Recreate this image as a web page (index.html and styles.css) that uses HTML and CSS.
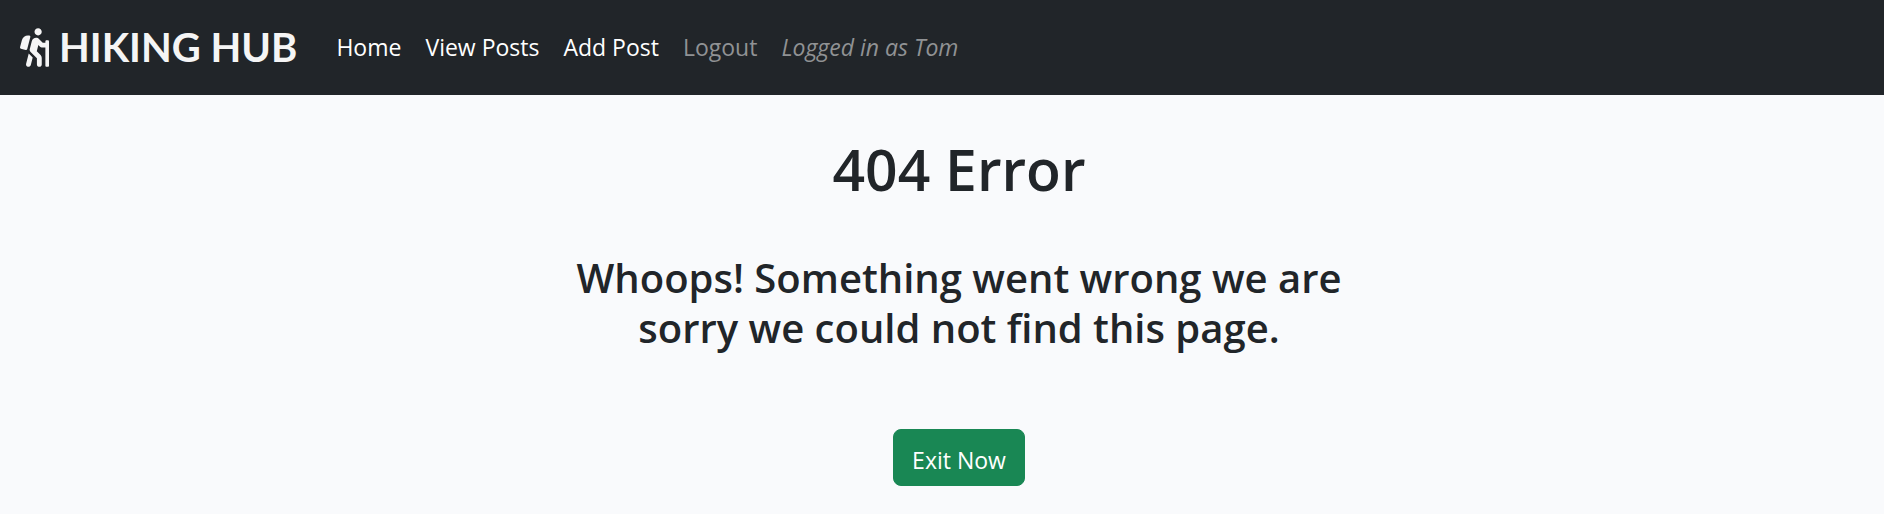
FILE: index.html
```
<!DOCTYPE html>
<html lang="en">
<head>
<meta charset="utf-8">
<meta name="viewport" content="width=device-width, initial-scale=1">
<title>Hiking Hub</title>
<link rel="stylesheet" href="styles.css">
</head>
<body>
<nav class="navbar">
  <a class="brand" href="#">
    <svg class="brand-icon" viewBox="0 0 384 512" fill="currentColor" aria-hidden="true"><path d="M80.95 472.23c-4.28 17.16 6.14 34.53 23.28 38.81 2.61.66 5.22.95 7.8.95 14.33 0 27.37-9.7 31.02-24.23l25.24-100.97-52.78-52.78-34.56 138.22zm14.89-196.12L137 117c2.19-8.42-3.14-16.95-11.92-19.06-43.88-10.52-88.35 15.07-99.32 57.17L.49 253.24c-2.19 8.42 3.14 16.95 11.92 19.06l63.56 15.25c8.79 2.1 17.68-3.02 19.87-11.44zM368 160h-16c-8.84 0-16 7.16-16 16v16h-34.75l-46.78-46.78C243.38 134.11 228.61 128 212.91 128c-27.02 0-50.47 18.3-57.03 44.52l-26.92 107.72a32.012 32.012 0 0 0 8.42 30.39L224 397.25V480c0 17.67 14.33 32 32 32s32-14.33 32-32v-82.75c0-17.09-6.66-33.16-18.75-45.25l-46.82-46.82c.15-.5.49-.89.62-1.41l19.89-79.57 22.43 22.43c6 6 14.14 9.38 22.62 9.38h48v240c0 8.84 7.16 16 16 16h16c8.84 0 16-7.16 16-16V176c.01-8.84-7.15-16-15.99-16zM240 96c26.51 0 48-21.49 48-48S266.51 0 240 0s-48 21.49-48 48 21.49 48 48 48z"/></svg>
    <span>HIKING HUB</span>
  </a>
  <ul class="nav-list">
    <li><a class="nav-link" href="#">Home</a></li>
    <li><a class="nav-link" href="#">View Posts</a></li>
    <li><a class="nav-link" href="#">Add Post</a></li>
    <li><a class="nav-link muted" href="#">Logout</a></li>
    <li><em class="nav-link muted">Logged in as Tom</em></li>
  </ul>
</nav>
<main class="content">
  <h1 class="title">404 Error</h1>
  <h2 class="message">Whoops! Something went wrong we are sorry we could not find this page.</h2>
  <button class="exit-button" type="button">Exit Now</button>
</main>
</body>
</html>
```
FILE: styles.css
```
* {
  box-sizing: border-box;
}

body {
  margin: 0;
  background: #f9fafc;
  color: #212529;
  font-family: "Segoe UI", "Open Sans", sans-serif;
  font-size: 23px;
  line-height: 36px;
}

.navbar {
  display: flex;
  align-items: center;
  gap: 27px;
  padding: 17px 20px 18px;
  background: #212529;
}

.brand {
  display: flex;
  align-items: center;
  gap: 10px;
  color: #f5f5f5;
  font-family: Lato, sans-serif;
  font-size: 40px;
  font-weight: 700;
  line-height: 60px;
  text-decoration: none;
}

.brand-icon {
  width: 29px;
  height: 39px;
}

.nav-list {
  display: flex;
  margin: 0;
  padding: 0;
  list-style: none;
}

.nav-link {
  display: block;
  padding: 12px;
  color: #fff;
  text-decoration: none;
}

.muted {
  color: #909294;
}

.content {
  display: flex;
  flex-direction: column;
  align-items: center;
  padding: 38px 0 24px 34px;
  text-align: center;
}

.title {
  margin: 0 0 48px;
  font-size: 57px;
  font-weight: 600;
  line-height: 72px;
}

.message {
  max-width: 800px;
  margin: 0 0 76px;
  font-size: 40px;
  font-weight: 600;
  line-height: 50px;
}

.exit-button {
  padding: 12px 18px 7px;
  border: 1px solid #198754;
  border-radius: 8px;
  background: #198754;
  color: #fff;
  font: inherit;
}
```
